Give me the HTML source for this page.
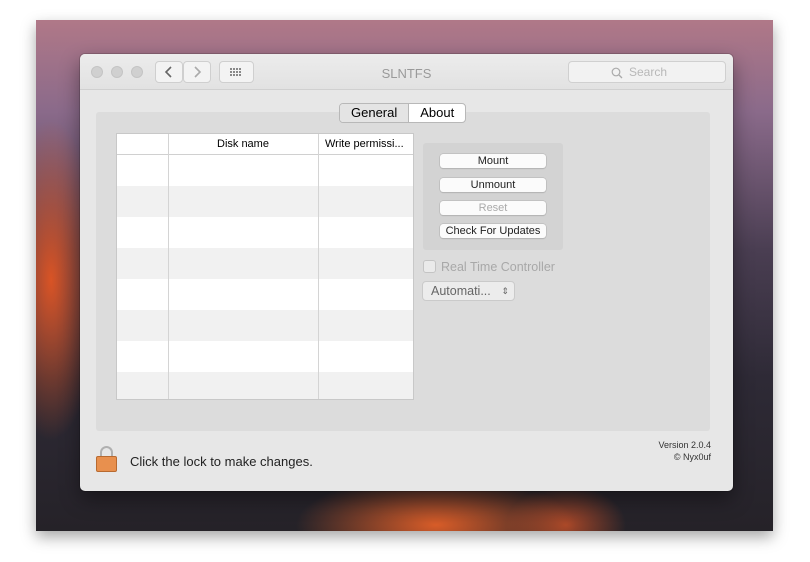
<!DOCTYPE html>
<html><head><style>
*{margin:0;padding:0;box-sizing:border-box}
body{width:810px;height:562px;background:#fff;position:relative;overflow:hidden;font-family:"Liberation Sans",sans-serif}
.bg{position:absolute;left:36px;top:20px;width:737px;height:511px;
background:
radial-gradient(ellipse 50px 160px at 15px 260px,rgba(225,85,35,.95),transparent),
radial-gradient(ellipse 140px 50px at 400px 505px,rgba(225,95,40,.95),transparent),
radial-gradient(ellipse 60px 40px at 530px 505px,rgba(200,80,40,.8),transparent),
linear-gradient(180deg,#b07888 0%,#8a6a8a 18%,#4a3e52 45%,#2e2a36 70%,#252228 100%);
box-shadow:0 6px 14px rgba(0,0,0,.35)}
.win{position:absolute;left:80px;top:54px;width:653px;height:437px;background:#e7e7e7;border-radius:5px;box-shadow:0 0 0 1px rgba(0,0,0,.15),0 8px 20px rgba(0,0,0,.4);overflow:hidden}
.tb{height:36px;background:linear-gradient(#ececec,#e2e2e2);border-bottom:1px solid #d0d0d0;position:relative}
.dot{position:absolute;top:12px;width:12px;height:12px;border-radius:50%;background:#d0d0d0;border:1px solid #c4c4c4}
.nb{position:absolute;top:7px;height:22px;border:1px solid #cfcfcf;background:#f3f3f3;border-radius:4px}
.title{position:absolute;left:0;right:0;top:12px;text-align:center;font-size:13px;color:#9a9a9a}
.search{position:absolute;left:488px;top:7px;width:158px;height:22px;border:1px solid #d0d0d0;border-radius:4px;background:#f2f2f2;color:#b8b8b8;font-size:12px;line-height:20px;padding-left:60px}
.tabs{position:absolute;left:259px;top:49px;height:20px;border:1px solid #b8b8b8;border-radius:4px;display:flex;font-size:13px;overflow:hidden;background:#fff;z-index:2}
.tabs div{padding:0 11px;line-height:18px}
.panel{position:absolute;left:16px;top:58px;width:614px;height:319px;background:#dcdcdc;border-radius:3px}
.table{position:absolute;left:36px;top:79px;width:298px;height:267px;background:#fff;border:1px solid #c8c8c8;overflow:hidden}
.row{position:absolute;left:0;width:100%;height:31px}
.vl{position:absolute;top:0;bottom:0;width:1px;background:#d4d4d4}
.hdr{position:absolute;top:0;left:0;width:100%;height:21px;border-bottom:1px solid #d0d0d0;font-size:11px;line-height:20px}
.box{position:absolute;left:343px;top:89px;width:140px;height:107px;background:#d3d3d3;border-radius:3px}
.btn{position:absolute;left:17px;width:106px;height:14px;background:#fbfbfb;border-radius:3px;box-shadow:0 0 0 .5px #b0b0b0,0 1px 1px rgba(0,0,0,.15);font-size:11px;text-align:center;line-height:14px;color:#222}
</style></head><body>
<div class="bg"></div>
<div class="win">
 <div class="tb">
  <div class="dot" style="left:11px"></div><div class="dot" style="left:31px"></div><div class="dot" style="left:51px"></div>
  <div class="nb" style="left:75px;width:28px"><svg width="26" height="20"><path d="M15 5 L10 10 L15 15" stroke="#666" stroke-width="1.6" fill="none"/></svg></div>
  <div class="nb" style="left:103px;width:28px"><svg width="26" height="20"><path d="M11 5 L16 10 L11 15" stroke="#aaa" stroke-width="1.6" fill="none"/></svg></div>
  <div class="nb" style="left:139px;width:35px"><svg width="33" height="20"><g fill="#888"><rect x="10" y="6" width="2" height="2"/><rect x="13" y="6" width="2" height="2"/><rect x="16" y="6" width="2" height="2"/><rect x="19" y="6" width="2" height="2"/><rect x="10" y="9" width="2" height="2"/><rect x="13" y="9" width="2" height="2"/><rect x="16" y="9" width="2" height="2"/><rect x="19" y="9" width="2" height="2"/><rect x="10" y="12" width="2" height="2"/><rect x="13" y="12" width="2" height="2"/><rect x="16" y="12" width="2" height="2"/><rect x="19" y="12" width="2" height="2"/></g></svg></div>
  <div class="title">SLNTFS</div>
  <div class="search"><svg width="12" height="12" style="position:absolute;left:42px;top:5px"><circle cx="5" cy="5" r="3.8" stroke="#aaa" fill="none" stroke-width="1.2"/><path d="M8 8 L11 11" stroke="#aaa" stroke-width="1.3"/></svg>Search</div>
 </div>
 <div class="panel"></div>
 <div class="tabs"><div style="background:#e4e4e4;border-right:1px solid #b8b8b8">General</div><div>About</div></div>
 <div class="table">
  <div class="row" style="top:52px;background:#f1f1f1"></div>
  <div class="row" style="top:114px;background:#f1f1f1"></div>
  <div class="row" style="top:176px;background:#f1f1f1"></div>
  <div class="row" style="top:238px;background:#f1f1f1"></div>
  <div class="hdr"><span style="position:absolute;left:100px">Disk name</span><span style="position:absolute;left:208px">Write permissi...</span></div>
  <div class="vl" style="left:51px"></div><div class="vl" style="left:201px"></div>
 </div>
 <div class="box">
  <div class="btn" style="top:11px">Mount</div>
  <div class="btn" style="top:35px">Unmount</div>
  <div class="btn" style="top:58px;color:#aaa">Reset</div>
  <div class="btn" style="top:81px">Check For Updates</div>
 </div>
 <div style="position:absolute;left:343px;top:206px;width:13px;height:13px;border:1px solid #c4c4c4;border-radius:3px;background:#eaeaea"></div>
 <div style="position:absolute;left:361px;top:206px;font-size:12.5px;color:#a8a8a8">Real Time Controller</div>
 <div style="position:absolute;left:342px;top:227px;width:93px;height:20px;border:1px solid #cacaca;border-radius:4px;background:#ececec;font-size:12.5px;color:#666;line-height:18px;padding-left:8px">Automati...<span style="position:absolute;right:5px;font-size:9px;top:0">⇕</span></div>
 <div style="position:absolute;left:16px;top:392px;width:21px;height:26px">
  <div style="position:absolute;left:4px;top:0;width:13px;height:12px;border:2px solid #b0b0b0;border-bottom:none;border-radius:7px 7px 0 0"></div>
  <div style="position:absolute;left:0;top:10px;width:21px;height:16px;background:#e8904e;border:1px solid #b86a30;border-radius:2px"></div>
 </div>
 <div style="position:absolute;left:50px;top:400px;font-size:13px;color:#222">Click the lock to make changes.</div>
 <div style="position:absolute;right:22px;top:385px;font-size:9px;color:#333;text-align:right;line-height:12px">Version 2.0.4<br>© Nyx0uf</div>
</div>
</body></html>
